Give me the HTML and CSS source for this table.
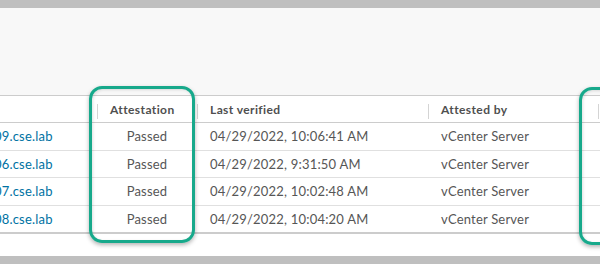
FILE: index.html
```html
<!DOCTYPE html>
<html lang="en">
<head>
<meta charset="utf-8">
<title>Host attestation</title>
<link rel="stylesheet" href="styles.css">
</head>
<body>
<div class="page">
  <div class="bar"></div>
  <div class="top-area"></div>
  <div class="table-area">
    <div class="grid">
      <div class="row head">
        <div class="cell c1"></div>
        <div class="cell c2 sep">Attestation</div>
        <div class="cell c3 sep">Last verified</div>
        <div class="cell c4 sep">Attested by</div>
        <div class="cell c5 sep"></div>
      </div>
      <div class="row">
        <div class="cell c1"><a class="link">esxi-09.cse.lab</a></div>
        <div class="cell c2 center">Passed</div>
        <div class="cell c3">04/29/2022, 10:06:41 AM</div>
        <div class="cell c4">vCenter Server</div>
        <div class="cell c5"></div>
      </div>
      <div class="row">
        <div class="cell c1"><a class="link">esxi-06.cse.lab</a></div>
        <div class="cell c2 center">Passed</div>
        <div class="cell c3">04/29/2022, 9:31:50 AM</div>
        <div class="cell c4">vCenter Server</div>
        <div class="cell c5"></div>
      </div>
      <div class="row">
        <div class="cell c1"><a class="link">esxi-07.cse.lab</a></div>
        <div class="cell c2 center">Passed</div>
        <div class="cell c3">04/29/2022, 10:02:48 AM</div>
        <div class="cell c4">vCenter Server</div>
        <div class="cell c5"></div>
      </div>
      <div class="row last">
        <div class="cell c1"><a class="link">esxi-08.cse.lab</a></div>
        <div class="cell c2 center">Passed</div>
        <div class="cell c3">04/29/2022, 10:04:20 AM</div>
        <div class="cell c4">vCenter Server</div>
        <div class="cell c5"></div>
      </div>
    </div>
  </div>
  <div class="bar"></div>
  <div class="highlight h1"></div>
  <div class="highlight h2"></div>
</div>
</body>
</html>
```
FILE: styles.css
```css
html, body {
  margin: 0;
  padding: 0;
}
body {
  width: 600px;
  height: 264px;
  overflow: hidden;
  background: #ffffff;
  font-family: "Lato", "Open Sans", sans-serif;
}
.page {
  position: relative;
  width: 600px;
  height: 264px;
  overflow: hidden;
  display: flex;
  flex-direction: column;
}
.bar {
  height: 8px;
  background: #bfbfbf;
  flex: none;
}
.top-area {
  height: 87px;
  background: #f8f8f8;
  flex: none;
}
.table-area {
  flex: 1;
  background: #ffffff;
  overflow: hidden;
}
.grid {
  margin-left: -47px;
  border-top: 1px solid #cccccc;
  display: flex;
  flex-direction: column;
}
.row {
  display: grid;
  grid-template-columns: 144px 100px 231px 170px 60px;
  height: 26.5px;
  border-bottom: 1px solid #e0e0e0;
  align-items: center;
  color: #565656;
  font-size: 13px;
  letter-spacing: 0.2px;
}
.row.head {
  height: 26px;
  border-bottom: 1px solid #cccccc;
  font-size: 12px;
  font-weight: 700;
  letter-spacing: 0.4px;
  color: #4f4f4f;
}
.row.last {
  border-bottom: 2px solid #cccccc;
}
.cell {
  position: relative;
  padding-left: 13px;
  white-space: nowrap;
  height: 100%;
  display: flex;
  align-items: center;
}
.cell.center {
  justify-content: center;
  padding-left: 0;
  padding-right: 0;
}
.sep::before {
  content: "";
  position: absolute;
  left: 0;
  top: 8px;
  bottom: 3px;
  border-left: 1px solid #d4d4d4;
}
.link {
  color: #0072a3;
}
.highlight {
  position: absolute;
  border: 3px solid #17a98b;
  border-radius: 13px;
  box-shadow: 0 2px 4px rgba(0, 0, 0, 0.3), inset 1px 1px 3px rgba(0, 0, 0, 0.12);
}
.h1 {
  left: 89px;
  top: 86px;
  width: 100px;
  height: 151px;
}
.h2 {
  left: 579px;
  top: 87px;
  width: 40px;
  height: 152px;
}
```
